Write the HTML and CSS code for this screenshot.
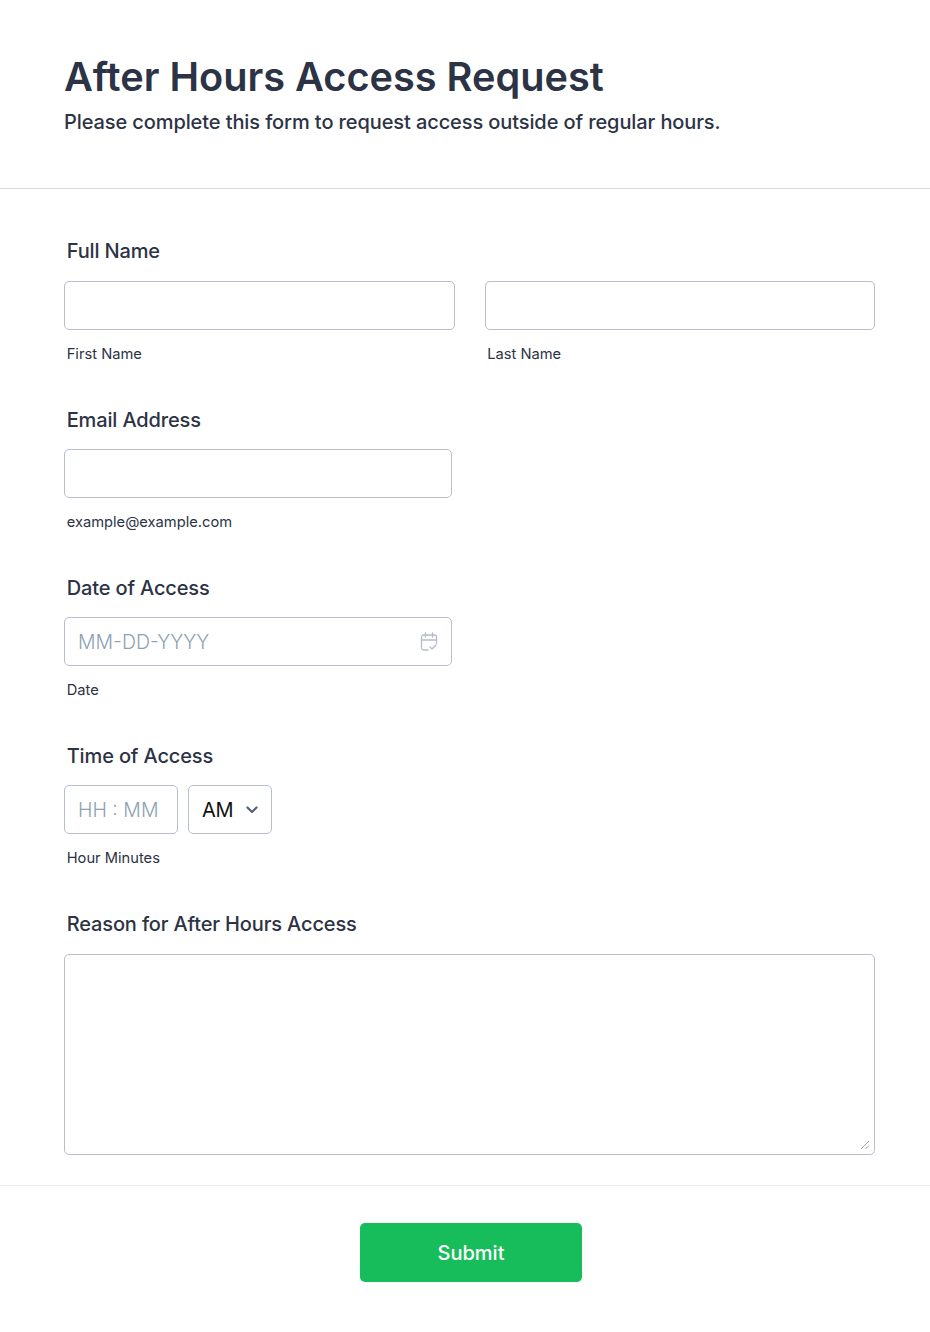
FILE: index.html
```html
<!DOCTYPE html>
<html lang="en">
<head>
<meta charset="utf-8">
<title>After Hours Access Request</title>
<link rel="stylesheet" href="styles.css">
</head>
<body>
<form class="form">
  <header class="header">
    <h1 class="title">After Hours Access Request</h1>
    <p class="subtitle">Please complete this form to request access outside of regular hours.</p>
  </header>
  <div class="fields">
    <section class="field">
      <div class="label">Full Name</div>
      <div class="name-row">
        <div class="name-col"><div class="box"></div><div class="hint">First Name</div></div>
        <div class="name-col"><div class="box"></div><div class="hint">Last Name</div></div>
      </div>
    </section>
    <section class="field">
      <div class="label">Email Address</div>
      <div class="box box-half"></div>
      <div class="hint">example@example.com</div>
    </section>
    <section class="field">
      <div class="label">Date of Access</div>
      <div class="box box-half box-date">
        <span class="placeholder">MM-DD-YYYY</span>
        <svg class="cal" width="18" height="20" viewBox="0 0 18 20" fill="none" stroke="#b5bcc8" stroke-width="1.3" stroke-linecap="round" stroke-linejoin="round"><path d="M8 18H3.500A2 2 0 0 1 1.500 16V5A2 2 0 0 1 3.500 3h11a2 2 0 0 1 2 2v6.500"/><path d="M1.500 8h15M5.500 1v4M12.500 1v4"/><path d="M10 15l2 2 4-4"/></svg>
      </div>
      <div class="hint">Date</div>
    </section>
    <section class="field">
      <div class="label">Time of Access</div>
      <div class="time-row">
        <div class="box box-time"><span class="placeholder">HH : MM</span></div>
        <div class="box box-ampm"><span class="ampm">AM</span>
          <svg class="chev" width="14" height="10" viewBox="0 0 14 10" fill="none" stroke="#566178" stroke-width="2.200" stroke-linecap="round" stroke-linejoin="round"><path d="M2.500 2.500L7 7l4.500-4.500"/></svg>
        </div>
      </div>
      <div class="hint">Hour Minutes</div>
    </section>
    <section class="field field-last">
      <div class="label">Reason for After Hours Access</div>
      <div class="box box-area">
        <svg class="grip" width="10" height="10" viewBox="0 0 10 10" fill="none" stroke="#a3a3a3" stroke-width="1"><path d="M9 1L1 9M9 5.500L5.500 9"/></svg>
      </div>
    </section>
  </div>
  <footer class="footer"><button class="submit" type="button">Submit</button></footer>
</form>
</body>
</html>
```
FILE: styles.css
```css
* { box-sizing: border-box; }
html, body { margin: 0; padding: 0; background: #fff; }
body { font-family: Inter, "Liberation Sans", sans-serif; color: #2c3345; }
.form { width: 930px; height: 1332px; }
.header { height: 189px; padding: 52px 64px 0; border-bottom: 1px solid #d8d8e6; }
.title { margin: 0; font-size: 39.700px; line-height: 50px; font-weight: 600; }
.subtitle { margin: 2px 0 0; font-size: 20px; line-height: 36px; font-weight: 500; letter-spacing: -0.100px; }
.fields { padding: 50px 55px 0 64px; }
.field { height: 168px; }
.field + .field .label { padding-top: 1px; margin-bottom: 17px; }
.field-last { height: auto; }
.field.field-last .label { margin-bottom: 18px; }
.label { padding-left: 2.700px; font-size: 20px; line-height: 24px; font-weight: 500; letter-spacing: -0.140px; margin-bottom: 18px; }
.name-row { display: flex; gap: 30px; }
.name-col { flex: 1; }
.box { height: 49px; border: 1px solid #b8bdd0; border-radius: 5px; background: #fff; }
.box-half { width: 388px; }
.hint { padding-left: 2.700px; margin-top: 15px; font-size: 14.700px; line-height: 18px; }
.box-date { display: flex; align-items: center; justify-content: space-between; padding: 0 13px; }
.placeholder { font-size: 19.500px; color: #8ea0b4; font-weight: 300; }
.time-row { display: flex; gap: 10px; }
.box-time { width: 114px; display: flex; align-items: center; padding-left: 13px; }
.box-ampm { width: 84px; display: flex; align-items: center; justify-content: space-between; padding: 0 12px 0 13px; }
.ampm { font-size: 20px; font-weight: 400; color: #111; letter-spacing: -0.300px; }
.box-area { height: 201px; position: relative; }
.grip { position: absolute; right: 4px; bottom: 4px; }
.footer { margin-top: 30px; border-top: 1px solid #e8e8ef; padding-top: 37px; padding-left: 360px; }
.submit { width: 222px; height: 59px; border: 0; border-radius: 5px; background: #18bd5b; color: #fff; font-family: inherit; font-size: 20px; font-weight: 500; }
```
